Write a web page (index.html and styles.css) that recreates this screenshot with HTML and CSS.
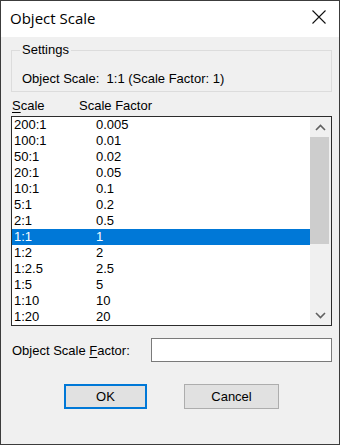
FILE: index.html
```html
<!DOCTYPE html>
<html lang="en">
<head>
    <meta charset="UTF-8">
    <title>Object Scale</title>
    <link rel="stylesheet" href="styles.css">
</head>
<body>
    <div class="dialog">
        <div class="title-bar">
            <span class="title">Object Scale</span>
            <svg class="close" width="14" height="14" viewBox="0 0 14 14">
                <path d="M0.5 0.5 L13.5 13.5 M13.5 0.5 L0.5 13.5" stroke="#111" stroke-width="1.1" fill="none"/>
            </svg>
        </div>

        <div class="content">
            <fieldset class="group">
                <legend>Settings</legend>
                <div class="current">Object Scale:&nbsp; 1:1 (Scale Factor: 1)</div>
            </fieldset>

            <div class="list-head">
                <span class="col-a"><u>S</u>cale</span>
                <span class="col-b">Scale Factor</span>
            </div>

            <div class="listbox">
                <div class="rows">
                    <div class="row"><span>200:1</span><span>0.005</span></div>
                    <div class="row"><span>100:1</span><span>0.01</span></div>
                    <div class="row"><span>50:1</span><span>0.02</span></div>
                    <div class="row"><span>20:1</span><span>0.05</span></div>
                    <div class="row"><span>10:1</span><span>0.1</span></div>
                    <div class="row"><span>5:1</span><span>0.2</span></div>
                    <div class="row"><span>2:1</span><span>0.5</span></div>
                    <div class="row selected"><span>1:1</span><span>1</span></div>
                    <div class="row"><span>1:2</span><span>2</span></div>
                    <div class="row"><span>1:2.5</span><span>2.5</span></div>
                    <div class="row"><span>1:5</span><span>5</span></div>
                    <div class="row"><span>1:10</span><span>10</span></div>
                    <div class="row"><span>1:20</span><span>20</span></div>
                </div>
                <div class="scrollbar">
                    <div class="arrow">
                        <svg width="11" height="7" viewBox="0 0 11 7"><path d="M1 6 L5.5 1.5 L10 6" stroke="#606060" stroke-width="1.6" fill="none"/></svg>
                    </div>
                    <div class="track">
                        <div class="thumb"></div>
                    </div>
                    <div class="arrow">
                        <svg width="11" height="7" viewBox="0 0 11 7"><path d="M1 1 L5.5 5.5 L10 1" stroke="#606060" stroke-width="1.6" fill="none"/></svg>
                    </div>
                </div>
            </div>

            <div class="factor">
                <label>Object Scale <u>F</u>actor:</label>
                <div class="input"></div>
            </div>

            <div class="buttons">
                <button class="btn default">OK</button>
                <button class="btn">Cancel</button>
            </div>
        </div>
    </div>
</body>
</html>
```

FILE: styles.css
```css
body {
    margin: 0;
    font-family: 'Liberation Sans', Arial, sans-serif;
    font-size: 13px;
    color: #000;
}

.dialog {
    width: 340px;
    height: 445px;
    box-sizing: border-box;
    border: 1px solid #3c3c3c;
    background-color: #f0f0f0;
    display: flex;
    flex-direction: column;
}

.title-bar {
    height: 36px;
    background-color: #fff;
    display: flex;
    align-items: center;
    justify-content: space-between;
    padding: 0 13px 0 9px;
}

.title {
    font-family: 'Open Sans', sans-serif;
    font-size: 15px;
    margin-top: -2px;
}

.close {
    margin-top: -4px;
}

.content {
    padding: 0 7px 0 10px;
    display: flex;
    flex-direction: column;
}

.group {
    margin: 5px 0 0 0;
    padding: 0 0 4px 10px;
    border: 1px solid #dcdcdc;
    min-width: 0;
}

.group legend {
    padding: 0 2px;
    margin-left: -2px;
    line-height: 16px;
}

.current {
    margin-top: 13px;
    line-height: 16px;
}

.list-head {
    display: flex;
    margin-top: 6px;
    line-height: 16px;
    padding-left: 1px;
}

.list-head u,
.factor u {
    text-decoration-thickness: 1px;
    text-underline-offset: 2px;
}

.col-a {
    width: 67px;
}

.listbox {
    height: 210px;
    margin-top: 2px;
    box-sizing: border-box;
    border: 1px solid #2c2c2c;
    background-color: #fff;
    display: flex;
    overflow: hidden;
}

.rows {
    flex: 1;
}

.row {
    height: 16px;
    line-height: 16px;
    display: flex;
    padding-left: 2px;
}

.row span:first-child {
    width: 82px;
}

.row.selected {
    background-color: #0078d7;
    color: #fff;
}

.scrollbar {
    width: 21px;
    background-color: #f0f0f0;
    display: flex;
    flex-direction: column;
}

.arrow {
    height: 20px;
    display: flex;
    align-items: center;
    justify-content: center;
}

.track {
    flex: 1;
}

.thumb {
    height: 107px;
    background-color: #cdcdcd;
    margin: 0 2px 0 0;
}

.factor {
    display: flex;
    align-items: center;
    justify-content: space-between;
    margin-top: 12px;
    padding-left: 1px;
}

.input {
    width: 181px;
    height: 24px;
    box-sizing: border-box;
    border: 1px solid #7a7a7a;
    background-color: #fff;
}

.buttons {
    display: flex;
    margin-top: 22px;
    padding-left: 53px;
    gap: 37px;
}

.btn {
    height: 25px;
    box-sizing: border-box;
    font-family: 'Liberation Sans', Arial, sans-serif;
    font-size: 13px;
    color: #000;
    background-color: #e1e1e1;
    border: 1px solid #adadad;
    padding: 0;
    width: 95px;
}

.btn.default {
    width: 83px;
    border: 2px solid #0078d7;
}
```
